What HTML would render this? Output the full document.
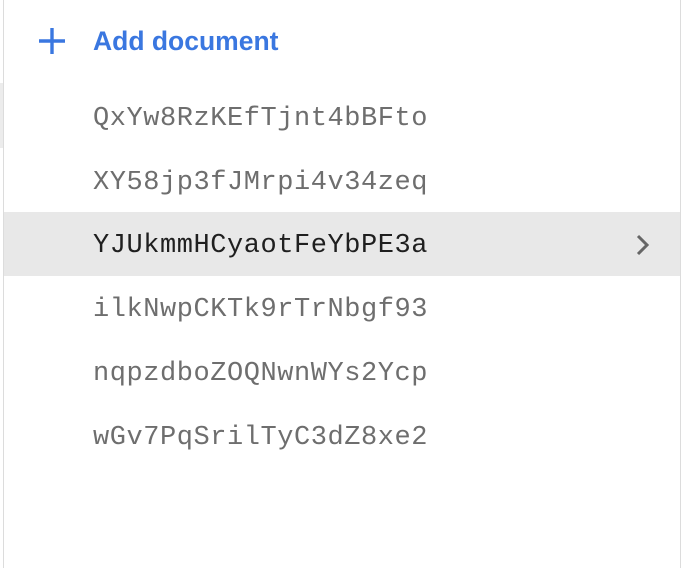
<!DOCTYPE html>
<html><head><style>
html,body{margin:0;padding:0;background:#fff;width:682px;height:568px;overflow:hidden;position:relative;font-family:"Liberation Sans",sans-serif}
.lb{position:absolute;left:3px;top:0;width:1px;height:568px;background:#dcdcdc}
.rb{position:absolute;left:680px;top:0;width:1px;height:568px;background:#dcdcdc}
.strip{position:absolute;left:0;top:83px;width:3px;height:65px;background:#ececec}
.add{position:absolute;left:93px;top:26px;font-size:26.5px;font-weight:bold;color:#3a77e0}
.row{position:absolute;left:4px;width:676px;height:64px;line-height:64px}
.row span{position:absolute;left:89px;top:2px;font-family:"Liberation Mono",monospace;font-size:27px;letter-spacing:0.55px;color:#6e6e6e}
.sel{background:#e8e8e8}
.sel span{color:#1f1f1f}
</style></head><body>
<div class="strip"></div><div class="lb"></div><div class="rb"></div>
<svg style="position:absolute;left:38px;top:27px" width="28" height="28"><path d="M14 1V27M1 14H27" stroke="#3a77e0" stroke-width="3.4"/></svg>
<div class="add">Add document</div>
<div class="row" style="top:85px"><span>QxYw8RzKEfTjnt4bBFto</span></div>
<div class="row" style="top:149px"><span>XY58jp3fJMrpi4v34zeq</span></div>
<div class="row sel" style="top:212px"><span>YJUkmmHCyaotFeYbPE3a</span>
<svg style="position:absolute;left:628px;top:21px" width="22" height="24"><path d="M6 3L15 12L6 21" fill="none" stroke="#666" stroke-width="3"/></svg></div>
<div class="row" style="top:276px"><span>ilkNwpCKTk9rTrNbgf93</span></div>
<div class="row" style="top:340px"><span>nqpzdboZOQNwnWYs2Ycp</span></div>
<div class="row" style="top:404px"><span>wGv7PqSrilTyC3dZ8xe2</span></div>
</body></html>
